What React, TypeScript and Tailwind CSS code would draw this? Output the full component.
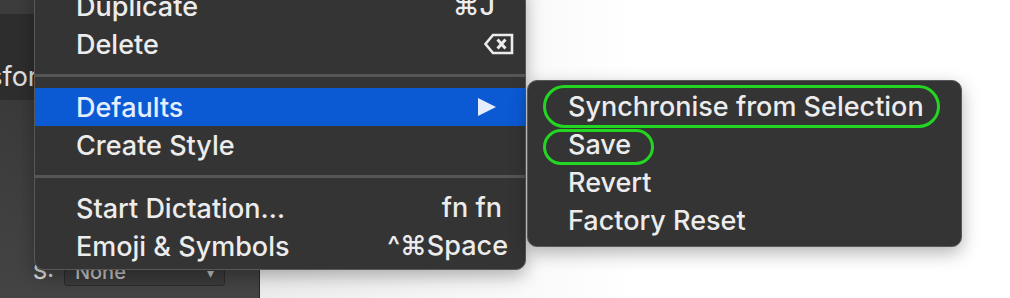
import React from 'react';

const font = { fontFamily: 'Inter, "Liberation Sans", sans-serif' };

const BackspaceIcon = () => (
  <svg width="30" height="22" viewBox="0 0 30 22" fill="none">
    <path d="M9 2 H28 V20 H9 L1.5 11 Z" stroke="#ececec" strokeWidth="2.6" strokeLinejoin="miter" />
    <path d="M13.5 6.5 L21.5 15.5 M21.5 6.5 L13.5 15.5" stroke="#ececec" strokeWidth="3" />
  </svg>
);

const Row = ({
  label,
  right,
  active = false,
  pad = 'pl-[41px]',
}: {
  label: string;
  right?: React.ReactNode;
  active?: boolean;
  pad?: string;
}) => (
  <div
    className={`h-[38px] flex items-center justify-between ${pad} ${
      active ? 'bg-[#0b5ad4] text-[#e4eeff]' : 'text-[#ececec]'
    }`}
  >
    <span className="leading-none whitespace-nowrap">{label}</span>
    {right}
  </div>
);

const Separator = () => (
  <div className="h-[25px] flex items-center">
    <div className="h-[3px] w-full bg-[#565656]" />
  </div>
);

const App = () => {
  return (
    <div
      className="relative w-[1010px] h-[298px] overflow-hidden flex bg-white text-[27px] font-medium"
      style={font}
    >
      {/* inspector panel behind the menu */}
      <div className="w-[260px] h-full flex flex-col bg-[#3d3d3d] border-r border-[#262626]">
        <div className="h-[14px] bg-[#3c3c3c]" />
        <div className="h-[86px] bg-[#2d2d2d] flex items-end pb-[3px] overflow-hidden">
          <span className="ml-[-69px] text-[#e0e0e0] font-normal whitespace-nowrap">Transform</span>
        </div>
        <div className="flex-1 bg-gradient-to-b from-[#3a3a3a] to-[#444444] flex items-end pb-[12px]">
          <span className="ml-[33px] mb-[4px] text-[#d8d8d8] text-[22px] leading-none">S:</span>
          <div className="ml-[10px] w-[161px] h-[28px] border border-[#2a2a2a] bg-[#3a3a3a] rounded-[3px] flex items-center justify-between px-[10px] text-[20px] text-[#bdbdbd]">
            <span>None</span>
            <span className="text-[14px]">▾</span>
          </div>
        </div>
      </div>
      <div className="flex-1 bg-gradient-to-r from-[#ececec] via-white to-white" />

      {/* context menu */}
      <div className="absolute left-[34px] top-[-14px] w-[492px] bg-[#343434] border border-[#585858] rounded-b-[10px] pb-[4px] shadow-[0_6px_18px_rgba(0,0,0,0.3)] overflow-hidden">
        <Row label="Duplicate" right={<span className="mr-[30px] text-[#ececec]">⌘J</span>} />
        <Row label="Delete" right={<span className="mr-[11px] flex"><BackspaceIcon /></span>} />
        <Separator />
        <Row
          label="Defaults"
          active
          right={
            <svg className="mr-[29px]" width="18" height="18" viewBox="0 0 18 18">
              <path d="M0 0 L18 9 L0 18 Z" fill="#e4eeff" />
            </svg>
          }
        />
        <Row label="Create Style" />
        <Separator />
        <Row label="Start Dictation…" right={<span className="mr-[23px]">fn fn</span>} />
        <Row label="Emoji & Symbols" right={<span className="mr-[17px]">^⌘Space</span>} />
      </div>

      {/* submenu */}
      <div className="absolute left-[527px] top-[80px] w-[435px] bg-[#343434] border border-[#585858] rounded-[10px] pt-[6px] pb-[7px] shadow-[0_6px_18px_rgba(0,0,0,0.3)]">
        <Row pad="pl-[40px]" label="Synchronise from Selection" />
        <Row pad="pl-[40px]" label="Save" />
        <Row pad="pl-[40px]" label="Revert" />
        <Row pad="pl-[40px]" label="Factory Reset" />
      </div>

      {/* green annotation marks */}
      <div className="absolute left-[543px] top-[85px] w-[397px] h-[43px] border-[3px] border-[#22d622] rounded-[22px]" />
      <div className="absolute left-[543px] top-[129px] w-[111px] h-[36px] border-[3px] border-[#22d622] rounded-[18px]" />
    </div>
  );
};

export default App;
